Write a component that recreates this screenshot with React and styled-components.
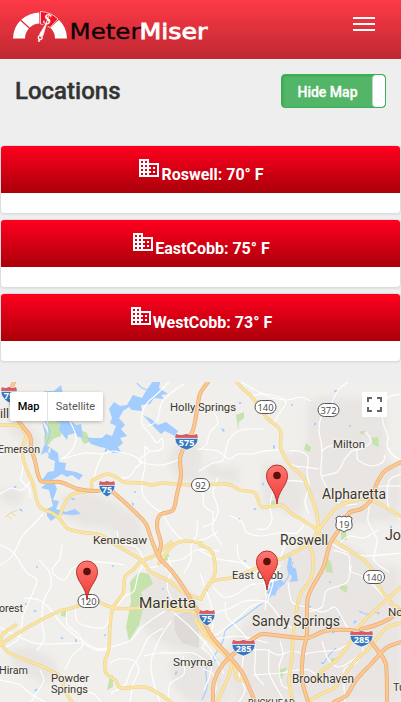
import React, { useState } from 'react';
import styled, { createGlobalStyle } from 'styled-components';

const GlobalStyle = createGlobalStyle`
  * { box-sizing: border-box; }
  body { margin: 0; background: #eee; color: #333; font-family: Roboto, sans-serif; overflow: hidden; }
`;

const Page = styled.div`
  display: flex;
  flex-direction: column;
  height: 702px;
  background: #eee;
`;

const NavBar = styled.header`
  display: flex;
  justify-content: space-between;
  align-items: flex-start;
  height: 59px;
  padding: 0 26px 0 12px;
  background: linear-gradient(#ff3a47, #bd2831);
`;

const MenuButton = styled.button`
  display: flex;
  flex-direction: column;
  gap: 4px;
  width: 22px;
  margin-top: 17px;
  padding: 0;
  border: 0;
  background: none;
`;

const MenuBar = styled.span`
  height: 2px;
  background: #fff;
`;

const TitleRow = styled.div`
  display: flex;
  justify-content: space-between;
  height: 86px;
  padding: 15px 15px 0;
`;

const Title = styled.h1`
  margin: 3px 0 0;
  font-size: 24px;
  line-height: 28px;
  font-weight: 500;
  color: #333;
  -webkit-text-stroke: 0.4px #333;
`;

const Toggle = styled.button`
  display: flex;
  width: 105px;
  height: 34px;
  padding: 0;
  overflow: hidden;
  border: 1px solid #3eae58;
  border-radius: 4px;
  background: #53b567;
  box-shadow: inset 1px 1px 2px #32a950;
`;

const ToggleLabel = styled.span`
  flex: 1;
  padding-left: 1px;
  text-align: center;
  font: 500 14px/34px Roboto, sans-serif;
  color: #fff;
  -webkit-text-stroke: 0.3px #fff;
`;

const ToggleHandle = styled.span`
  width: 13px;
  border: 1px solid #ccc;
  border-width: 0 0 0 1px;
  border-radius: 4px;
  background: #fff;
`;

const CardList = styled.div`
  display: flex;
  flex-direction: column;
  gap: 5px;
  margin-bottom: 20px;
`;

const Card = styled.article`
  height: 69px;
  overflow: hidden;
  border: 1px solid #ddd;
  border-radius: 4px;
  background: #fff;
  box-shadow: 0 1px 1px rgba(0, 0, 0, 0.05);
`;

const CardHeading = styled.h2`
  height: 47px;
  margin: 0;
  padding-top: 10px;
  background: linear-gradient(#ff001e, #aa000a);
  color: #fff;
  font-size: 16px;
  line-height: 18px;
  font-weight: 700;
  text-align: center;
`;

const BuildingIcon = styled.svg`
  width: 24px;
  height: 24px;
  fill: #fff;
  vertical-align: baseline;
`;

const MapPanel = styled.section`
  position: relative;
  height: 320px;
  overflow: hidden;
`;

const MapCanvas = styled.svg`
  display: block;
`;

const MapTypes = styled.div`
  position: absolute;
  top: 10px;
  left: 10px;
  display: flex;
  height: 29px;
  border-radius: 2px;
  background: #fff;
  box-shadow: 0 1px 4px -1px rgba(0, 0, 0, 0.4);
`;

const MapType = styled.button`
  width: ${(p) => (p.$active ? 37 : 56)}px;
  padding: 0;
  border: 0;
  border-left: ${(p) => (p.$active ? '0' : '1px solid #e4e4e4')};
  background: none;
  font: ${(p) => (p.$active ? 500 : 400)} 11px/29px Roboto, sans-serif;
  color: ${(p) => (p.$active ? '#000' : '#565656')};
`;

const Fullscreen = styled.button`
  position: absolute;
  top: 10px;
  right: 14px;
  display: grid;
  place-items: center;
  width: 25px;
  height: 25px;
  padding: 0;
  border: 0;
  background: #fff;
`;

const locations = [
  { name: 'Roswell', temp: 70 },
  { name: 'EastCobb', temp: 75 },
  { name: 'WestCobb', temp: 73 },
];

// Turns "x,y x,y ..." into a smooth curve through every point.
function curve(text) {
  const p = text.split(' ').map((s) => s.split(',').map(Number));
  let d = `M${p[0]}`;
  for (let i = 0; i < p.length - 1; i++) {
    const a = p[i - 1] || p[i];
    const b = p[i];
    const c = p[i + 1];
    const e = p[i + 2] || c;
    d += `C${b[0] + (c[0] - a[0]) / 7},${b[1] + (c[1] - a[1]) / 7} ${c[0] - (e[0] - b[0]) / 7},${c[1] - (e[1] - b[1]) / 7} ${c[0]},${c[1]}`;
  }
  return d;
}

const urban = [
  '9,424 28,424 38,438 40,455 31,453 22,440 10,432',
  '173,445 186,440 202,446 200,482 179,480 168,463',
  '61,497 85,492 108,499 126,510 140,520 143,552 124,548 111,528 84,526 64,517',
  '308,402 325,396 387,401 386,462 401,465 401,520 358,522 333,540 321,540 308,494 282,460 287,453 307,451',
  '263,465 278,463 293,478 304,492 300,517 280,510 263,507',
  '207,462 222,468 238,466 240,483 218,480 204,475',
  '281,556 312,540 340,540 361,552 401,590 401,702 236,702 228,680 222,655 233,640 246,622 268,592 280,576',
  '135,577 160,573 183,587 199,604 201,652 176,650 150,636 135,614',
  '8,650 31,646 53,659 61,678 43,683 15,669',
  '169,665 203,650 221,660 232,702 189,702 175,689',
  '350,568 371,563 400,568 400,598 376,589',
  '0,490 14,487 23,494 19,505 2,502',
  '140,607 153,611 150,623 137,619',
];

const minorRoads = [
  '70,421 76,436 73,448 66,456 61,459',
  '62,459 85,453 103,454 113,451 134,456 142,462',
  '103,454 97,467 94,478 89,492',
  '142,462 135,469 130,476 118,479',
  '169,382 158,393 149,401 143,410 142,424 150,434 157,443 162,438 162,449 150,451 145,447 145,466 142,482 143,495 151,505 160,512',
  '147,426 157,421 162,402 175,390 184,384',
  '150,451 140,459 143,463 162,465 178,460',
  '0,455 9,450 18,451 23,466 21,480 29,488 30,498',
  '0,494 11,488 22,490 30,482',
  '43,514 33,525 23,535 12,556 0,565',
  '0,545 13,552 27,573 37,580 30,599 23,616 19,638 4,648',
  '23,598 39,600 51,610 60,622 77,637 98,649 118,645 131,640 141,628 154,618 165,611',
  '39,560 49,571 51,586 44,600 42,621 44,639 37,651',
  '0,627 15,635 34,643 56,644 81,643 96,650 112,649',
  '62,543 60,558 52,571 64,580 73,568 91,562 111,563 124,565',
  '75,605 77,621 90,627 105,627 110,615',
  '117,531 120,543 136,547 144,561 138,575 134,591 124,597 116,608',
  '65,670 72,656 83,645 79,635 67,624 67,607',
  '110,663 118,659 133,660 139,670 133,684 130,702',
  '163,628 149,637 141,653 131,670 125,685 111,693',
  '171,621 159,640 151,662 153,680 160,702',
  '174,613 187,624 197,634 207,645 216,659 224,674',
  '144,656 158,653 177,653 193,653 208,662',
  '183,656 184,674 170,684 168,702',
  '168,557 171,570 167,587 173,603 172,612',
  '144,568 155,567 168,562 183,559 197,550 219,551',
  '197,519 197,534 191,547 191,560 184,573',
  '160,510 172,529 182,539 202,540 218,532',
  '203,489 204,506 213,513 213,531 222,545',
  '218,477 213,492 218,509 214,522 203,527',
  '200,449 218,451 229,459 238,454 252,454 263,451 279,450',
  '199,471 213,463 223,460 229,440 241,430 263,429',
  '211,408 218,422 210,432 206,445 197,450',
  '248,396 265,394 279,397 286,403 279,414 274,423',
  '241,382 257,391 270,397 287,400 300,397 311,401',
  '348,382 338,390 331,404 321,418 319,430 322,450 321,474 327,488 336,501 346,505 357,504',
  '401,394 389,397 383,408 383,422 388,437 387,446 394,456 401,460',
  '366,432 371,441 363,448 352,451 345,459 337,472 321,476',
  '321,451 330,446 344,445 356,447 358,460 372,466 383,462 385,455',
  '289,451 299,451 308,457 307,472 309,486 305,502 309,514',
  '281,451 293,465 305,467 319,469',
  '306,482 287,481 274,491 270,506 272,520 266,529 257,529',
  '229,515 242,522 246,532 260,536 278,533 296,533 304,525',
  '280,532 285,542 281,556 276,567 272,587 267,602',
  '237,544 239,558 249,567 262,575 266,596 265,610',
  '200,551 218,559 241,563 253,572 265,575 281,565',
  '213,588 224,597 237,594 250,585 265,583 284,578',
  '202,620 218,612 231,608 245,601 267,602 282,620 296,631',
  '199,630 215,635 228,626 240,616 250,607 266,601',
  '200,573 206,590 212,608 212,630 202,648',
  '225,602 227,617 235,625 245,636 255,648 255,673 264,685',
  '288,582 292,602 306,607 323,612 335,607 342,618 350,630 370,635',
  '307,612 322,607 326,591 339,586 348,581 351,565',
  '333,550 349,556 350,571 362,576 378,590 389,603',
  '361,638 363,651 355,664 344,670 345,702',
  '322,641 328,659 338,667 350,662 365,651',
  '304,654 316,652 326,651 337,650 354,641',
  '253,650 267,650 278,655 293,651 306,655',
  '253,675 268,674 281,673 297,670 309,670 320,678',
  '244,650 242,667 239,675 245,690 239,702',
  '269,649 269,672 276,687 285,702',
  '280,641 283,654 279,667 282,685 291,689',
  '203,669 213,674 216,688 212,702',
  '202,648 212,658 210,675 204,690',
  '213,640 235,636 250,638 268,643',
  '346,501 361,496 374,488 383,486 401,486',
  '401,474 389,481 388,505 401,520',
  '378,530 364,538 349,536 339,544',
  '370,503 368,521 377,540 374,560 389,572',
  '329,542 345,551 366,556 401,553',
  '0,680 18,684 31,694 45,702',
  '40,670 44,681 37,692 31,702',
  '76,676 82,690 94,694 101,702',
];

const yellowRoads = [
  '0,425 18,426 26,435 23,446 23,459 29,475 33,484 39,506 52,513 59,518 67,528 80,532 101,535 114,544 140,559 151,572 169,581 183,592 201,599',
  '59,518 65,503 73,494 91,491',
  '92,491 92,481 101,476 108,474 116,477 124,482 143,483 151,485 163,483 175,484 195,485 227,484 240,490 255,493 262,507 281,505 292,514 304,521 317,530 328,545',
  '237,382 242,388 251,396 258,405 266,417 278,427 281,434 281,449 291,466 303,477 310,493 317,514 318,531',
  '0,645 18,633 41,620 60,611 78,606 91,597 101,603 115,608 138,608 158,604 171,609 193,612 201,616',
  '171,542 154,556 141,561 134,569 125,577 123,593 113,608 110,626 109,649 105,661 106,673 116,681 121,688 145,687 161,695 171,702',
  '0,641 8,652 26,660 43,667 61,677 64,689 72,702',
  '0,645 3,634 16,625',
  '159,564 171,547 184,541 201,543',
  '200,545 212,552 215,573 205,591 201,599 211,582 231,578 242,574 260,567 276,561 302,548 312,541 319,527',
  '309,545 313,557 311,578 300,595 296,614 293,637 292,658 289,680 293,702',
  '318,531 326,520 337,507 352,501 366,499 382,505 401,517',
  '335,541 350,551 365,561 374,573 380,588 392,604 398,607',
  '200,621 207,632 217,648 223,653 233,663 237,678 245,681',
  '314,682 322,671 338,659 351,641 358,628 372,613 401,587',
  '401,623 386,628 369,648 355,661 335,687 325,692 309,701',
  '201,613 189,603 169,609',
  '195,619 206,637 229,659 230,672 217,702',
];

const highways = [
  '14,382 11,390 11,403 18,420 30,436 31,448 35,461 41,481 60,482 78,489 98,491 107,488 121,499 137,514 146,524 152,541 159,557 171,570 184,588 195,607 201,617 213,638 229,656 243,674 255,702',
  '208,382 200,394 197,410 193,430 184,447 180,459 181,476 177,494 173,510 160,515 157,527 161,543 159,557 166,565',
  '401,462 385,471 377,483 371,500 361,509 349,513 340,528 330,544 323,568 308,597 307,633 303,654 302,679 308,702',
  '213,702 214,682 224,663 241,648 256,637 264,634 290,637 308,638 325,631 350,630 364,635 378,651 386,665 387,702',
  '361,629 376,625 389,619 401,610',
  '401,642 386,648 371,664 356,680 347,695 334,702',
];

const water = [
  '153,381 160,382 159,388 168,394 161,395 164,399 154,398 150,404 141,405 142,411 132,410 129,407 123,411 119,418 125,425 121,429 127,436 120,438 123,443 118,447 121,452 113,453 106,448 100,447 91,444 87,438 78,437 75,433 68,435 67,440 59,430 61,423 54,421 71,421 76,425 81,424 83,437 93,438 102,438 106,434 112,436 116,426 110,423 112,418 109,409 114,402 120,406 127,405 133,395 142,398 146,391',
  '42,421 47,432 44,445 50,447 45,455 51,448 58,453 59,462 66,463 65,470 76,472 83,475 79,480 72,475 67,477 62,474 52,480 42,480 48,472 54,471 55,461 48,458 51,449 41,455 46,439',
  '44,391 54,391 61,385 63,394 73,401 59,399 49,397',
  '48,482 54,482 57,489 53,500 59,501 56,509 66,512 75,509 81,514 72,515 60,514 51,521 47,516 47,509 53,506 49,490 41,488',
  '143,415 151,419 158,425 166,422 178,431 175,436 165,431 161,434 151,424',
  '289,556 292,559 291,566 296,569 298,581 290,582 292,576 288,573 287,567',
  '266,593 270,588 270,583 280,578 285,584 278,587 275,596',
];

const waterways = [
  '293,562 287,579 273,594 261,604 244,617 226,630 223,641 213,658 206,669 207,687 202,700',
  '359,611 367,614 376,612',
  '137,383 142,388 151,391',
  '45,421 50,432 46,447 52,460',
  '323,664 330,654 336,648',
];

const parks = [
  '48,421 62,422 61,436 53,439 45,449 44,436 48,432',
  '81,430 87,433 90,442 84,444 81,439',
  '139,572 149,574 153,584 141,592 145,602 139,625 129,641 126,627 131,602 130,582',
  '160,555 169,554 169,560 161,561',
  '236,415 244,412 244,418 239,422 238,431 237,422',
  '306,443 311,447 310,452 304,450',
  '361,431 365,431 363,435 359,433',
  '371,438 378,437 379,447 373,445',
  '325,555 331,562 333,573 326,572',
  '340,585 348,586 346,593 340,589',
  '278,670 287,667 283,676 280,681',
  '331,658 337,659 334,665 331,662',
  '110,676 113,675 113,687 107,690',
  '341,532 346,530 347,540 341,540',
  '270,502 275,500 275,505 269,504',
  '61,613 68,609 66,617 61,616',
];

const ponds = [
  [37, 567], [62, 638], [76, 641], [105, 635], [35, 611], [73, 499], [135, 492], [133, 504],
  [106, 450], [154, 392], [240, 403], [223, 430], [292, 405], [315, 424], [336, 391], [350, 426],
  [263, 484], [274, 447], [239, 519], [255, 509], [382, 397], [330, 582], [340, 617], [355, 622],
  [368, 616], [378, 613], [333, 632], [322, 663], [310, 607], [216, 660], [245, 561], [391, 527],
  [176, 673], [26, 604], [15, 487], [21, 510], [113, 566], [207, 590], [36, 690], [163, 589],
];

// text, x, baseline, width, size
const labels = [
  ['ill', 0, 418, 9, 12],
  ['Emerson', -2, 453, 42, 11],
  ['Holly Springs', 170, 411, 66, 11],
  ['Milton', 333, 448, 32, 11],
  ['Alpharetta', 322, 499, 64, 14],
  ['Kennesaw', 93, 544, 54, 11],
  ['Roswell', 280, 545, 48, 14],
  ['Jo', 385, 540, 16, 14],
  ['East Cobb', 232, 579, 51, 10.5],
  ['Marietta', 139, 608, 57, 15],
  ['orest', -1, 612, 24, 11],
  ['Sandy Springs', 252, 626, 88, 14],
  ['No', 388, 616, 15, 11],
  ['Smyrna', 173, 666, 40, 11],
  ['Hiram', -1, 674, 29, 11],
  ['Powder', 51, 682, 38, 11],
  ['Springs', 51, 693, 37, 11],
  ['Brookhaven', 292, 683, 62, 12],
  ['Tu', 393, 691, 12, 11],
  ['BUCKHEAD', 248, 706, 47, 8.5],
];

function Interstate({ x, y, n }) {
  const w = n.length > 2 ? 11.5 : 8;
  return (
    <g transform={`translate(${x} ${y})`}>
      <path
        d={`M${-w + 1} -8Q${-w / 2} -6 0 -8Q${w / 2} -6 ${w - 1} -8Q${w + 1} -2 ${w - 1} 1Q${w - 4} 6 0 8Q${-w + 4} 6 ${-w + 1} 1Q${-w - 1} -2 ${-w + 1} -8Z`}
        fill="#3678bd" stroke="#fff" strokeWidth="0.7"
      />
      <path d={`M${-w + 1} -8Q${-w / 2} -6 0 -8Q${w / 2} -6 ${w - 1} -8L${w} -4H${-w}Z`} fill="#d95b60" />
      <path d={`M${-w} -3.6H${w}`} stroke="#fff" strokeWidth="0.8" />
      <text y="4.3" textAnchor="middle" fill="#fff" fontFamily="Open Sans" fontWeight="700" fontSize="9.2">{n}</text>
    </g>
  );
}

function StateRoute({ x, y, n, us }) {
  const w = n.length > 2 ? 10.5 : 9;
  return (
    <g transform={`translate(${x} ${y})`}>
      {us
        ? <path d="M-8-6L-5-8Q-2-6 0-8Q2-6 5-8L8-6Q7-3 8 0Q9 6 3 6L0 8L-3 6Q-9 6-8 0Q-7-3-8-6Z" fill="#fff" stroke="#555" strokeWidth="1" />
        : <rect x={-w} y="-6.5" width={w * 2} height="13" rx="6.5" fill="#fff" stroke="#555" strokeWidth="1" />}
      <text y="3.5" textAnchor="middle" fill="#444" fontFamily="Open Sans" fontSize="9.4">{n}</text>
    </g>
  );
}

function Pin({ x, y }) {
  return (
    <g transform={`translate(${x} ${y})`}>
      <path
        d="M0 0C-1-14-10.5-18-10.5-28.5A10.5 10.5 0 0 1 10.5-28.5C10.5-18 1-14 0 0Z"
        fill="url(#pin)" stroke="#b5322e" strokeWidth="1"
      />
      <circle cy="-28.5" r="3.8" fill="#5e100e" />
    </g>
  );
}

function AtlantaMap() {
  return (
    <MapCanvas width="401" height="320" viewBox="0 382 401 320">
      <defs>
        <linearGradient id="pin" x2="0" y2="1">
          <stop stopColor="#ff7770" />
          <stop offset="1" stopColor="#ed3934" />
        </linearGradient>
        <filter id="soft"><feGaussianBlur stdDeviation="3" /></filter>
      </defs>
      <rect y="382" width="401" height="320" fill="#f0efeb" />
      <g fill="#e8e5e2" filter="url(#soft)">{urban.map((p) => <polygon key={p} points={p} />)}</g>
      <path d="M174 616L199 607V648L182 643L175 632Z" fill="#dddad7" />
      <g fill="#c6e3ae">{parks.map((p) => <polygon key={p} points={p} />)}</g>
      <g fill="#a3ccff">
        {water.map((p) => <polygon key={p} points={p} />)}
        {ponds.map(([x, y], i) => <ellipse key={i} cx={x} cy={y} rx={1 + (i % 3) / 2} ry="1" transform={`rotate(${i * 37} ${x} ${y})`} />)}
      </g>
      <g fill="none" stroke="#a3ccff" strokeWidth="1.1">{waterways.map((p) => <path key={p} d={curve(p)} />)}</g>
      <g fill="none" stroke="#fff" strokeWidth="1.15" strokeLinejoin="round">
        {minorRoads.map((p) => <path key={p} d={curve(p)} />)}
      </g>
      <g fill="none" strokeLinecap="round" strokeLinejoin="round">
        <g stroke="#ead293" strokeWidth="3.4">{yellowRoads.map((p) => <path key={p} d={curve(p)} />)}</g>
        <g stroke="#fbe3a1" strokeWidth="2.4">{yellowRoads.map((p) => <path key={p} d={curve(p)} />)}</g>
        <g stroke="#e9ac70" strokeWidth="4">{highways.map((p) => <path key={p} d={curve(p)} />)}</g>
        <g stroke="#fbc793" strokeWidth="2.6">{highways.map((p) => <path key={p} d={curve(p)} />)}</g>
      </g>
      <path d="M5 517L10 513L18 510M7 515L12 519M11 513L16 516" fill="none" stroke="#f0d9a3" />
      <g fontFamily="Roboto, sans-serif" fill="#3a362d" stroke="#f4f2ee" strokeWidth="1.6" paintOrder="stroke" strokeLinejoin="round">
        {labels.map(([t, x, y, w, s]) => (
          <text key={t} x={x} y={y} fontSize={s} textLength={w} lengthAdjust="spacingAndGlyphs">{t}</text>
        ))}
      </g>
      <Interstate x={9} y={395} n="75" />
      <Interstate x={186.5} y={442} n="575" />
      <Interstate x={107} y={489} n="75" />
      <Interstate x={207} y={618} n="75" />
      <Interstate x={243.5} y={648} n="285" />
      <Interstate x={361.5} y={639} n="285" />
      <StateRoute x={265.5} y={407} n="140" />
      <StateRoute x={328.5} y={410} n="372" />
      <StateRoute x={200.5} y={485} n="92" />
      <StateRoute x={344} y={524} n="19" us />
      <StateRoute x={374} y={577} n="140" />
      <StateRoute x={88.5} y={601} n="120" />
      <Pin x={277} y={504} />
      <Pin x={87} y={600} />
      <Pin x={267} y={590} />
    </MapCanvas>
  );
}

function Logo() {
  return (
    <svg width="200" height="50" viewBox="12 0 200 50" role="img" aria-label="MeterMiser">
      <path d="M13 38.5A27 26 0 0 1 67 38.5H55A15 15 0 0 0 25 38.5Z" fill="#fff" />
      <path d="M20.5 20L31 29.5M40 11.5V25M49 28L59.5 18.5" stroke="#db333e" strokeWidth="1.3" />
      <path d="M40.5 11.5A27 26 0 0 1 58 19L50 27.5A15 15 0 0 0 40.5 24Z" fill="#ef1328" stroke="#fff" strokeWidth="0.7" />
      <path d="M46.5 23L41.5 36L38 42" fill="none" stroke="#db333e" strokeWidth="4.5" />
      <path d="M46.8 22.5L39.6 34.2L40.6 36.6L43 35.6Z" fill="#fff" stroke="#fff" strokeWidth="0.7" />
      <circle cx="40.2" cy="37.6" r="1.9" fill="none" stroke="#fff" strokeWidth="1.3" />
      <path d="M39.4 39.5L38.8 41.8" stroke="#fff" strokeWidth="1.6" />
      <text x="43.5" y="24" fill="#fff" fontFamily="Liberation Serif" fontWeight="700" fontSize="15" transform="rotate(18 47 20)">$</text>
      <text x="69.5" y="39" fontFamily="DejaVu Sans" fontSize="22" textLength="71" lengthAdjust="spacingAndGlyphs" fill="#090406" stroke="#090406" strokeWidth="0.3">Meter</text>
      <text x="139.5" y="39" fontFamily="DejaVu Sans" fontSize="22" textLength="68" lengthAdjust="spacingAndGlyphs" fill="#fff" stroke="#fff" strokeWidth="0.8">Miser</text>
    </svg>
  );
}

const buildingPath = 'M12 7V3H2v18h20V7H12zM6 19H4v-2h2v2zm0-4H4v-2h2v2zm0-4H4V9h2v2zm0-4H4V5h2v2zm4 12H8v-2h2v2zm0-4H8v-2h2v2zm0-4H8V9h2v2zm0-4H8V5h2v2zm10 12h-8v-2h2v-2h-2v-2h2v-2h-2V9h8v10zm-2-8h-2v2h2v-2zm0 4h-2v2h2v-2z';

export default function App() {
  const [mapShown, setMapShown] = useState(true);
  return (
    <Page>
      <GlobalStyle />
      <NavBar>
        <Logo />
        <MenuButton aria-label="Menu"><MenuBar /><MenuBar /><MenuBar /></MenuButton>
      </NavBar>
      <TitleRow>
        <Title>Locations</Title>
        <Toggle onClick={() => setMapShown(!mapShown)}>
          <ToggleLabel>{mapShown ? 'Hide Map' : 'Show Map'}</ToggleLabel>
          <ToggleHandle />
        </Toggle>
      </TitleRow>
      <CardList>
        {locations.map(({ name, temp }) => (
          <Card key={name}>
            <CardHeading>
              <BuildingIcon viewBox="0 0 24 24"><path d={buildingPath} /></BuildingIcon>
              {name}: {temp}° F
            </CardHeading>
          </Card>
        ))}
      </CardList>
      {mapShown && (
        <MapPanel>
          <AtlantaMap />
          <MapTypes>
            <MapType $active>Map</MapType>
            <MapType>Satellite</MapType>
          </MapTypes>
          <Fullscreen aria-label="Full screen">
            <svg width="15" height="15" viewBox="0 0 15 15" fill="none" stroke="#666" strokeWidth="2">
              <path d="M1 5V1H5M10 1H14V5M14 10V14H10M5 14H1V10" />
            </svg>
          </Fullscreen>
        </MapPanel>
      )}
    </Page>
  );
}
